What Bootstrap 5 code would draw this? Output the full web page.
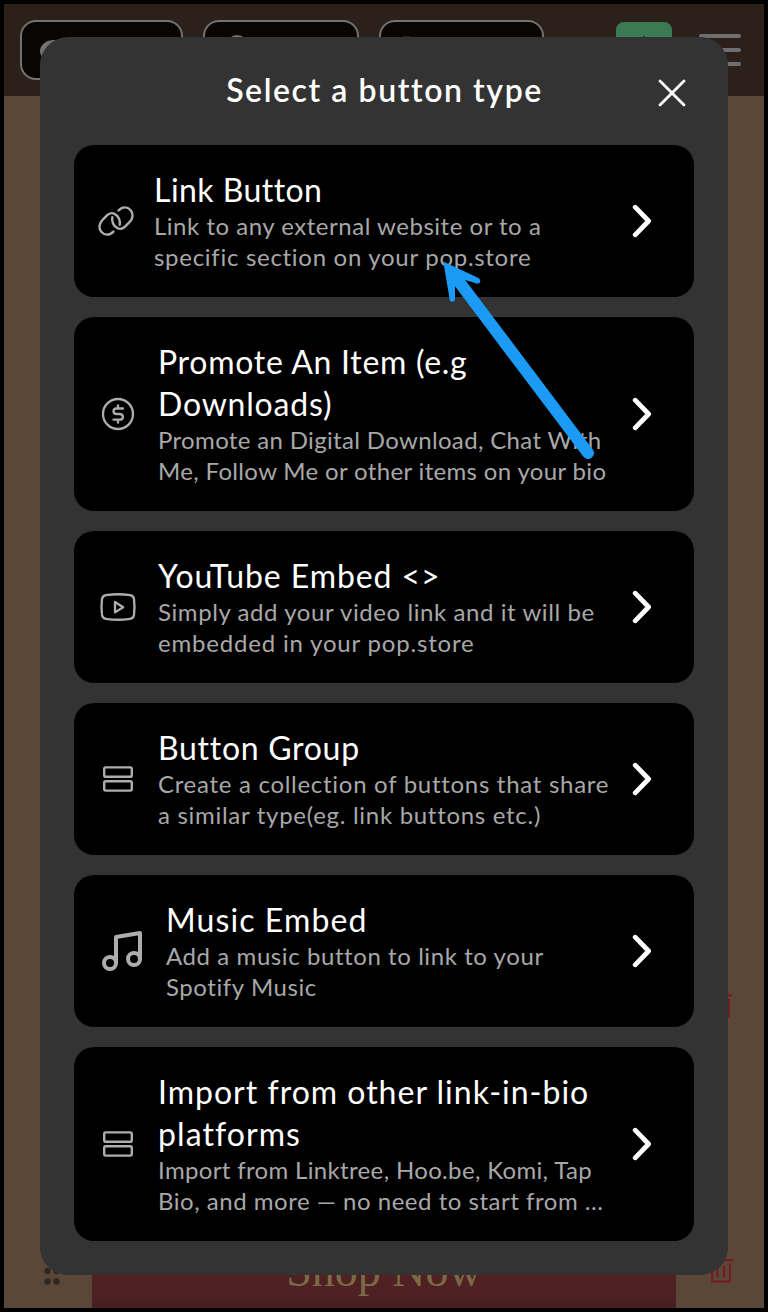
<!DOCTYPE html>
<html lang="en">
<head>
<meta charset="utf-8">
<meta name="viewport" content="width=device-width, initial-scale=1">
<title>Select a button type</title>
<link rel="stylesheet" href="https://cdn.jsdelivr.net/npm/bootstrap@5.3.0/dist/css/bootstrap.min.css">
<style>
  body { font-family: Lato, "Liberation Sans", sans-serif; background: #000; }
  .screen { width: 768px; height: 1312px; border: 4px solid #000; background: #5b4738; }
  .topbar { height: 92px; background: #2b211a; padding: 16px 19px 0 16px; }
  .pill { height: 60px; border: 2px solid #727272; border-radius: 16px; background: #080503; }
  .pill-a { width: 163px; margin-right: 20px; }
  .pill-b { width: 156px; margin-right: 20px; }
  .pill-c { width: 165px; margin-right: 72px; }
  .add-btn { width: 56px; height: 56px; margin-top: 2px; border-radius: 8px; background: #3b7a53; }
  .burger { width: 42px; margin: 14px 0 0 27px; gap: 10px; }
  .burger span { height: 4px; border-radius: 2px; background: #6f6e70; }
  .shop-row { height: 58px; }
  .shop-btn { width: 584px; background: linear-gradient(#4f2122 75%, #451f20); color: #7b6a47; font: 46px/41px "Liberation Serif", serif; }
  .side { width: 88px; }
  .side-icon { padding: 7px 0 0 32px; }
  .trash-float { right: 31px; top: 988px; }

  .sheet { left: 36px; top: 33px; width: 688px; height: 1238px; border-radius: 28px; background: #333; padding: 0 34px; }
  .sheet-head { height: 108px; color: #fff; }
  .sheet-title { font-size: 32px; line-height: 42px; font-weight: 600; letter-spacing: 1.58px; margin: 32px 0 0 1px; }
  .close-x { right: 42px; top: 42px; }
  .type-list { gap: 20px; }
  .type-card { background: #000; border-radius: 20px; padding: 24px 42px 24px 24px; color: #fff; text-decoration: none; }
  .type-icon { width: 40px; flex: none; margin-right: 20px; color: #adadad; }
  .type-icon.narrow { width: 36px; }
  .type-icon.wide { width: 48px; }
  .type-name { font-size: 32px; line-height: 42px; }
  .type-desc { font-size: 24px; line-height: 31px; color: #a8a8a8; margin: -1px 0 1px; }
  .type-name span, .type-desc span { display: block; white-space: nowrap; }
  .t3 { letter-spacing: .34px } .t4 { letter-spacing: .45px } .t5 { letter-spacing: .52px }
  .t6 { letter-spacing: .58px } .t7 { letter-spacing: .71px } .t8 { letter-spacing: .81px }
  .t9 { letter-spacing: .92px } .t10 { letter-spacing: 1px } .t11 { letter-spacing: 1.08px } .t12 { letter-spacing: 1.1px }
  .pointer { left: -4px; top: -4px; pointer-events: none; }
</style>
</head>
<body>
<svg class="d-none" xmlns="http://www.w3.org/2000/svg">
  <symbol id="chev" viewBox="0 0 20 34"><path d="M3.200 3.200 16.600 17 3.200 30.800" fill="none" stroke="#fff" stroke-width="4.800" stroke-linecap="round" stroke-linejoin="round"/></symbol>
  <symbol id="rows" viewBox="0 0 40 40"><g fill="none" stroke="currentColor" stroke-width="2.4"><rect x="4.2" y="8.4" width="27.6" height="9.4" rx="1.6"/><rect x="4.2" y="22.2" width="27.6" height="9.4" rx="1.6"/></g></symbol>
  <symbol id="trash" viewBox="0 0 26 28"><path d="M1 3.2h24" stroke="#761a20" stroke-width="2.2"/><path d="M4 6.8v17.8h18V6.8M9.5 9v12M16 9v12" fill="none" stroke="#761a20" stroke-width="2"/></symbol>
</svg>
<div class="screen position-relative overflow-hidden d-flex flex-column">
  <header class="topbar d-flex align-items-start">
    <div class="pill pill-a"><svg width="60" height="56" viewBox="0 0 60 56"><ellipse cx="32" cy="29" rx="14" ry="11" fill="#727272"/></svg></div>
    <div class="pill pill-b"><svg width="60" height="56" viewBox="0 0 60 56"><circle cx="32" cy="23.500" r="9.5" fill="none" stroke="#727272" stroke-width="2"/></svg></div>
    <div class="pill pill-c"><svg width="60" height="56" viewBox="0 0 60 56"><rect x="22" y="14" width="7" height="12" fill="#242322"/></svg></div>
    <div class="add-btn d-flex align-items-center justify-content-center"><svg width="28" height="28" viewBox="0 0 28 28"><path d="M14 0v28M0 14h28" stroke="#1d3d2a" stroke-width="2"/></svg></div>
    <div class="burger d-flex flex-column"><span></span><span></span><span></span></div>
  </header>
  <div class="shop-row mt-auto d-flex">
    <div class="side"><svg width="88" height="58" viewBox="0 0 88 58" fill="#2b2826"><circle cx="43.5" cy="21" r="3.2"/><circle cx="52.5" cy="21" r="3.2"/><circle cx="43.5" cy="31.5" r="3.2"/><circle cx="52.5" cy="31.5" r="3.2"/></svg></div>
    <div class="shop-btn text-center">Shop Now</div>
    <div class="side side-icon"><svg class="d-block" width="26" height="28"><use href="#trash"/></svg></div>
  </div>
  <svg class="trash-float position-absolute" width="26" height="28"><use href="#trash"/></svg>

  <section class="sheet position-absolute">
    <div class="sheet-head d-flex justify-content-center align-items-start">
      <h1 class="sheet-title mb-0">Select a button type</h1>
      <svg class="close-x position-absolute" width="28" height="28" viewBox="0 0 28 28"><path d="M2 2 26 26M26 2 2 26" stroke="#fff" stroke-width="2.8" stroke-linecap="round"/></svg>
    </div>
    <div class="type-list d-flex flex-column">
      <a class="type-card d-flex align-items-center" href="#">
        <svg class="type-icon narrow" height="36" viewBox="0 0 36 36" fill="none" stroke="currentColor" stroke-width="2.4" stroke-linecap="round"><path d="M14.3 14.2C13.6 18 15 23 19.5 25.2C22 26.3 25 25.7 27 23.7L31.5 19.2C35.4 15.3 35.4 10.2 32.5 7C29.5 3.700 24.500 3.200 20.600 7.400"/><path d="M21.700 21.800C22.400 18 21 13 16.500 10.800C14 9.700 11 10.300 9 12.300L4.500 16.800C.6 20.700.6 25.800 3.500 29C6.500 32.300 11.500 32.800 15.400 28.600"/></svg>
        <div class="flex-grow-1">
          <div class="type-name"><span class="t4">Link Button</span></div>
          <div class="type-desc"><span class="t5">Link to any external website or to a</span><span class="t7">specific section on your pop.store</span></div>
        </div>
        <svg width="20" height="34"><use href="#chev"/></svg>
      </a>
      <a class="type-card d-flex align-items-center" href="#">
        <svg class="type-icon" height="40" viewBox="0 0 40 40" fill="none" stroke="currentColor" stroke-width="2.3" stroke-linecap="round" stroke-linejoin="round"><circle cx="20" cy="20" r="15"/><path d="M25 14.500H18.300a3 3 0 0 0-2.800 2.800c0 1.500 1.200 2.500 2.800 2.700h3.600c1.700.2 3 1.300 3 2.900a3 3 0 0 1-3 2.800H15.500M20 11.500v3M20 25.700v3"/></svg>
        <div class="flex-grow-1">
          <div class="type-name"><span class="t7">Promote An Item (e.g</span><span class="t8">Downloads)</span></div>
          <div class="type-desc"><span class="t3">Promote an Digital Download, Chat With</span><span class="t3">Me, Follow Me or other items on your bio</span></div>
        </div>
        <svg width="20" height="34"><use href="#chev"/></svg>
      </a>
      <a class="type-card d-flex align-items-center" href="#">
        <svg class="type-icon" height="40" viewBox="0 0 40 40" fill="none" stroke="currentColor" stroke-width="2.3" stroke-linejoin="round"><path d="M8 8.200Q20 6.300 32 8.200Q35.500 8.800 36 12Q37 20 36 28Q35.500 31.200 32 31.800Q20 33.700 8 31.800Q4.500 31.200 4 28Q3 20 4 12Q4.500 8.800 8 8.200Z"/><path d="M17 15v10.400L25.200 20.200Z"/></svg>
        <div class="flex-grow-1">
          <div class="type-name"><span class="t9">YouTube Embed &lt;&gt;</span></div>
          <div class="type-desc"><span class="t6">Simply add your video link and it will be</span><span class="t8">embedded in your pop.store</span></div>
        </div>
        <svg width="20" height="34"><use href="#chev"/></svg>
      </a>
      <a class="type-card d-flex align-items-center" href="#">
        <svg class="type-icon" height="40" viewBox="-2 0 40 40"><use href="#rows" width="40" height="40"/></svg>
        <div class="flex-grow-1">
          <div class="type-name"><span class="t7">Button Group</span></div>
          <div class="type-desc"><span class="t7">Create a collection of buttons that share</span><span class="t7">a similar type(eg. link buttons etc.)</span></div>
        </div>
        <svg width="20" height="34"><use href="#chev"/></svg>
      </a>
      <a class="type-card d-flex align-items-center" href="#">
        <svg class="type-icon wide" height="48" viewBox="0 0 24 24" fill="none" stroke="currentColor" stroke-width="2" stroke-linecap="round" stroke-linejoin="round"><path d="M9 18V5l12-2v13"/><circle cx="6" cy="18" r="3"/><circle cx="18" cy="16" r="3"/></svg>
        <div class="flex-grow-1">
          <div class="type-name"><span class="t12">Music Embed</span></div>
          <div class="type-desc"><span class="t6">Add a music button to link to your</span><span class="t6">Spotify Music</span></div>
        </div>
        <svg width="20" height="34"><use href="#chev"/></svg>
      </a>
      <a class="type-card d-flex align-items-center" href="#">
        <svg class="type-icon" height="40" viewBox="-2 0 40 40"><use href="#rows" width="40" height="40"/></svg>
        <div class="flex-grow-1">
          <div class="type-name"><span class="t10">Import from other link-in-bio</span><span class="t11">platforms</span></div>
          <div class="type-desc"><span class="t3">Import from Linktree, Hoo.be, Komi, Tap</span><span class="t5">Bio, and more — no need to start from ...</span></div>
        </div>
        <svg width="20" height="34"><use href="#chev"/></svg>
      </a>
    </div>
  </section>

  <svg class="pointer position-absolute" width="768" height="520" viewBox="0 0 768 520" fill="#1b9bf5">
    <path d="M460 283 588 453" stroke="#1b9bf5" stroke-width="12" stroke-linecap="round"/>
    <path d="M443.300 261.500 479 278.300 477 283.500 463.500 279.400 455 286V299H449.600Z"/>
    <circle cx="477.500" cy="280.900" r="2.700"/><circle cx="452.300" cy="299" r="2.700"/>
  </svg>
</div>
</body>
</html>
